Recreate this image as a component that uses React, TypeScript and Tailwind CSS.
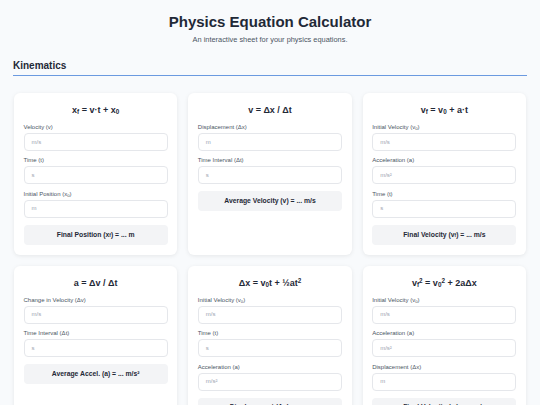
import React from "react";

type Field = { label: React.ReactNode; ph: React.ReactNode };
type Card = { title: React.ReactNode; fields: Field[]; result: React.ReactNode };

const S = ({ children }: { children: React.ReactNode }) => (
  <sub className="text-[0.7em] relative top-[0.2em] align-baseline">{children}</sub>
);
const P = ({ children }: { children: React.ReactNode }) => (
  <sup className="text-[0.7em] relative -top-[0.45em] align-baseline">{children}</sup>
);

const cards: Card[] = [
  {
    title: (
      <>
        x<S>f</S> = v·t + x<S>0</S>
      </>
    ),
    fields: [
      { label: "Velocity (v)", ph: "m/s" },
      { label: "Time (t)", ph: "s" },
      { label: <>Initial Position (x<S>0</S>)</>, ph: "m" },
    ],
    result: <>Final Position (x<S>f</S>) = ... m</>,
  },
  {
    title: <>v = Δx / Δt</>,
    fields: [
      { label: "Displacement (Δx)", ph: "m" },
      { label: "Time Interval (Δt)", ph: "s" },
    ],
    result: <>Average Velocity (v) = ... m/s</>,
  },
  {
    title: (
      <>
        v<S>f</S> = v<S>0</S> + a·t
      </>
    ),
    fields: [
      { label: <>Initial Velocity (v<S>0</S>)</>, ph: "m/s" },
      { label: "Acceleration (a)", ph: "m/s²" },
      { label: "Time (t)", ph: "s" },
    ],
    result: <>Final Velocity (v<S>f</S>) = ... m/s</>,
  },
  {
    title: <>a = Δv / Δt</>,
    fields: [
      { label: "Change in Velocity (Δv)", ph: "m/s" },
      { label: "Time Interval (Δt)", ph: "s" },
    ],
    result: <>Average Accel. (a) = ... m/s²</>,
  },
  {
    title: (
      <>
        Δx = v<S>0</S>t + ½at<P>2</P>
      </>
    ),
    fields: [
      { label: <>Initial Velocity (v<S>0</S>)</>, ph: "m/s" },
      { label: "Time (t)", ph: "s" },
      { label: "Acceleration (a)", ph: "m/s²" },
    ],
    result: <>Displacement (Δx) = ... m</>,
  },
  {
    title: (
      <>
        v<S>f</S>
        <P>2</P> = v<S>0</S>
        <P>2</P> + 2aΔx
      </>
    ),
    fields: [
      { label: <>Initial Velocity (v<S>0</S>)</>, ph: "m/s" },
      { label: "Acceleration (a)", ph: "m/s²" },
      { label: "Displacement (Δx)", ph: "m" },
    ],
    result: <>Final Velocity (v<S>f</S>) = ... m/s</>,
  },
];

function CardView({ c }: { c: Card }) {
  return (
    <div className="bg-white rounded-[6px] shadow-[0_1px_4px_rgba(0,0,0,0.08)] px-[9.5px] pt-[10px] pb-[10px] flex flex-col">
      <div className="text-center font-bold text-[9px] leading-[14px] text-[#1f2937]">{c.title}</div>
      <div className="flex flex-col gap-[4.4px] mt-[5px]">
        {c.fields.map((f, i) => (
          <div key={i} className="flex flex-col">
            <div className="text-[6px] leading-[10px] text-[#4b5563]">{f.label}</div>
            <div className="mt-[1px] h-[18px] rounded-[4px] border border-[#e5e7eb] bg-white flex items-center px-[7px] text-[6px] text-[#9ca3af]">
              {f.ph}
            </div>
          </div>
        ))}
      </div>
      <div className="mt-[7px] h-[20px] rounded-[4px] bg-[#f3f4f6] flex items-center justify-center text-[6.8px] font-bold text-[#1f2937]">
        {c.result}
      </div>
    </div>
  );
}

export default function App() {
  return (
    <div
      className="min-h-[405px] bg-[#f8fafc] px-[13px] pt-[12px] pb-[20px]"
      style={{ fontFamily: '"Liberation Sans", Arial, sans-serif' }}
    >
      <h1 className="text-center font-bold text-[15px] leading-[20px] text-[#1f2937]">Physics Equation Calculator</h1>
      <p className="text-center text-[7.4px] leading-[10px] text-[#4b5563] mt-[2.5px]">
        An interactive sheet for your physics equations.
      </p>
      <h2 className="mt-[15px] font-bold text-[10px] leading-[12px] text-[#1f2937] pb-[3.5px] border-b-[1.5px] border-[#6b9ae0]">
        Kinematics
      </h2>
      <div className="grid grid-cols-3 gap-[11px] mt-[17px] px-[1px]">
        {cards.map((c, i) => (
          <CardView key={i} c={c} />
        ))}
      </div>
    </div>
  );
}
